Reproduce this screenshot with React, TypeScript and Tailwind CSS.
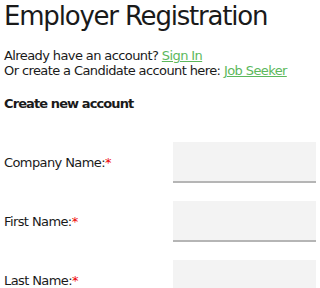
const FIELDS = ['Company Name:', 'First Name:', 'Last Name:']

export default function App() {
  return (
    <div className="min-h-screen overflow-hidden bg-white px-1 text-[#1a1a1a] [font-family:'DejaVu_Sans',sans-serif]">
      <h1 className="whitespace-nowrap text-[26px] leading-[32px] font-normal tracking-[-1.2px]">Employer Registration</h1>

      <div className="mt-[16px] whitespace-nowrap text-[13px] leading-[15px] tracking-[-0.6px]">
        <p>
          Already have an account?{' '}
          <a href="#" className="text-[#5cb85c] underline">Sign In</a>
        </p>
        <p>
          Or create a Candidate account here:{' '}
          <a href="#" className="text-[#5cb85c] underline">Job Seeker</a>
        </p>
      </div>

      <p className="mt-[18px] text-[13px] font-bold leading-[16px] tracking-[-0.9px]">Create new account</p>

      <form className="mt-[30px] flex flex-col gap-[18px]">
        {FIELDS.map((label) => (
          <div key={label} className="flex items-center">
            <label className="w-[169px] shrink-0 text-[13px] tracking-[-0.6px]">
              {label}
              <span className="text-[#e00]">*</span>
            </label>
            <input
              type="text"
              className="h-[41px] min-w-0 flex-1 border-b-2 border-[#b5b5b5] bg-[#f3f3f3] outline-none"
            />
          </div>
        ))}
      </form>
    </div>
  )
}
